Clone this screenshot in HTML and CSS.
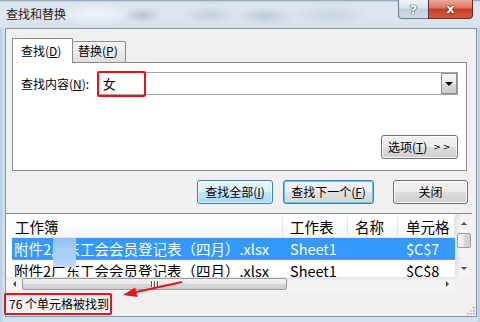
FILE: index.html
```html
<!DOCTYPE html>
<html>
<head>
<meta charset="utf-8">
<link rel="stylesheet" href="styles.css">
</head>
<body>
<div class="win">
  <div class="titlebar">
    <span class="title">查找和替换</span>
    <div class="caps">
      <span class="cap help">?</span>
      <span class="cap close">x</span>
    </div>
  </div>
  <div class="client">
    <div class="tabs">
      <span class="tab active">查找(<u>D</u>)</span>
      <span class="tab">替换(<u>P</u>)</span>
    </div>
    <div class="panel">
      <div class="findrow">
        <span class="lbl">查找内容(<u>N</u>):</span>
        <div class="combo">
          <span class="val">女</span>
          <span class="drop"><i class="tri-down"></i></span>
          <span class="mark"></span>
        </div>
      </div>
      <div class="optrow">
        <span class="btn opt">选项(<u>T</u>)<span class="gt">&gt;&gt;</span></span>
      </div>
    </div>
    <div class="btnrow">
      <span class="btn hot w76">查找全部(<u>I</u>)</span>
      <span class="btn def w91">查找下一个(<u>F</u>)</span>
      <span class="btn w75 ml19">关闭</span>
    </div>
    <div class="list">
      <div class="listmain">
        <div class="cols">
          <div class="grid hdr">
            <span class="c1">工作簿</span>
            <span class="c2">工作表</span>
            <span class="c3">名称</span>
            <span class="c4">单元格</span>
          </div>
          <div class="grid row sel">
            <span class="c1">附件2广东工会会员登记表（四月）.xlsx</span>
            <span class="c2">Sheet1</span>
            <span class="c3"></span>
            <span class="c4">$C$7</span>
          </div>
          <div class="grid row">
            <span class="c1">附件2广东工会会员登记表（四月）.xlsx</span>
            <span class="c2">Sheet1</span>
            <span class="c3"></span>
            <span class="c4">$C$8</span>
          </div>
          <span class="blur"></span>
        </div>
        <div class="vscroll">
          <span class="vbtn"><i class="tri-up"></i></span>
          <span class="vthumb"></span>
          <span class="vspace"></span>
          <span class="vbtn"><i class="tri-down small"></i></span>
        </div>
      </div>
      <div class="hscroll">
        <span class="hbtn"><i class="tri-left"></i></span>
        <span class="hthumb"><i class="grip"></i><i class="grip"></i><i class="grip"></i></span>
        <span class="hspace"></span>
        <span class="hbtn"><i class="tri-right"></i></span>
        <span class="corner"></span>
      </div>
    </div>
    <div class="status">
      <span class="found">76 个单元格被找到</span>
      <svg class="sizegrip" width="10" height="10" viewBox="0 0 10 10">
        <rect x="8" y="2" width="1.5" height="1.5" fill="#a8a8a8"/>
        <rect x="5" y="5" width="1.5" height="1.5" fill="#a8a8a8"/>
        <rect x="8" y="5" width="1.5" height="1.5" fill="#a8a8a8"/>
        <rect x="2" y="8" width="1.5" height="1.5" fill="#a8a8a8"/>
        <rect x="5" y="8" width="1.5" height="1.5" fill="#a8a8a8"/>
        <rect x="8" y="8" width="1.5" height="1.5" fill="#a8a8a8"/>
      </svg>
    </div>
  </div>
</div>
<svg class="arrow" width="70" height="24" viewBox="0 0 70 24">
  <line x1="62" y1="3" x2="14" y2="13.5" stroke="#e8141b" stroke-width="2"/>
  <polygon points="3,16 15,8.5 17.5,18" fill="#e8141b"/>
</svg>
</body>
</html>
```
FILE: styles.css
```css
html, body {
  margin: 0;
  padding: 0;
}
body {
  width: 480px;
  height: 322px;
  overflow: hidden;
  position: relative;
  font-family: "Noto Sans CJK SC", "Noto Sans", sans-serif;
  font-size: 12px;
  color: #000;
  background: #c6d6e7;
}
u { text-decoration: underline; text-underline-offset: 1px; }

.win {
  width: 480px;
  height: 322px;
  display: flex;
  flex-direction: column;
  background: linear-gradient(90deg, #b9cde2 0px, #d3e0ed 4px, #d3e0ed 476px, #b9cde2 480px);
}

/* title bar */
.titlebar {
  height: 28px;
  flex: none;
  display: flex;
  justify-content: space-between;
  align-items: flex-start;
  padding: 0 7px 0 6px;
  box-sizing: border-box;
  background:
    radial-gradient(ellipse 20px 8px at 143px 15px, rgba(150,166,184,0.55), rgba(150,166,184,0) 100%),
    radial-gradient(ellipse 28px 9px at 210px 15px, rgba(170,186,204,0.5), rgba(170,186,204,0) 100%),
    radial-gradient(ellipse 30px 9px at 265px 16px, rgba(160,176,196,0.5), rgba(160,176,196,0) 100%),
    radial-gradient(ellipse 40px 10px at 330px 15px, rgba(175,190,208,0.45), rgba(175,190,208,0) 100%),
    radial-gradient(ellipse 40px 12px at 95px 14px, rgba(255,255,255,0.6), rgba(255,255,255,0) 100%),
    linear-gradient(180deg, #8a9bb0 0px, #d9e3ee 2px, #dfe7f0 14px, #d6e0eb 28px);
}
.title {
  margin-top: 6px;
  line-height: 16px;
  font-size: 12px;
  color: #1a1a1a;
}
.caps { display: flex; }
.cap {
  height: 19px;
  box-sizing: border-box;
  display: flex;
  align-items: center;
  justify-content: center;
  font-family: "DejaVu Sans", sans-serif;
  font-weight: bold;
  color: #fff;
}
.help {
  width: 30px;
  border: 1px solid #68798e;
  border-top: none;
  border-right: none;
  border-radius: 0 0 0 4px;
  background: linear-gradient(180deg, #eef3f8 0%, #d8e1eb 45%, #c0cedd 50%, #cfdbe7 100%);
  font-size: 13px;
  text-shadow: 0 0 1px #3a4656, 0 0 1px #3a4656, 0 0 1px #3a4656;
}
.close {
  width: 45px;
  border: 1px solid #6a2b22;
  border-top: none;
  border-radius: 0 0 4px 0;
  background: linear-gradient(180deg, #eaa99c 0%, #d97a64 42%, #c4402a 52%, #d25a3f 100%);
  font-size: 13px;
  padding-bottom: 2px;
  text-shadow: 0 0 1px #3b120c, 0 0 1px #3b120c, 0 0 1px #3b120c;
}

/* client */
.client {
  margin-left: 5px;
  width: 472px;
  height: 289px;
  flex: none;
  box-sizing: border-box;
  border: 1px solid #8496ab;
  background: #f0f0f0;
  display: flex;
  flex-direction: column;
}

/* tabs */
.tabs {
  display: flex;
  align-items: flex-end;
  margin: 9px 0 0 6px;
  height: 24px;
}
.tab {
  box-sizing: border-box;
  border: 1px solid #898c95;
  border-bottom: none;
  line-height: 18px;
  height: 21px;
  width: 53px;
  padding-left: 5px;
  background: linear-gradient(180deg, #f4f4f4 0%, #ebebeb 50%, #dedede 100%);
  border-radius: 2px 2px 0 0;
  white-space: nowrap;
}
.tab.active {
  width: 61px;
  height: 25px;
  margin-bottom: -1px;
  padding-left: 8px;
  padding-top: 3px;
  background: #fff;
  position: relative;
  z-index: 1;
  border-radius: 0;
}
.tab + .tab { border-left: none; }

/* panel */
.panel {
  margin-left: 6px;
  width: 455px;
  height: 109px;
  box-sizing: border-box;
  border: 1px solid #898c95;
  background: #fff;
  padding: 9px 8px 11px 8px;
  display: flex;
  flex-direction: column;
  justify-content: space-between;
}
.findrow {
  display: flex;
  align-items: center;
}
.lbl {
  width: 77px;
  line-height: 16px;
  white-space: nowrap;
}
.combo {
  position: relative;
  width: 361px;
  height: 23px;
  box-sizing: border-box;
  border: 1px solid #a5a5a5;
  display: flex;
  align-items: center;
  justify-content: space-between;
  background: #fff;
}
.val {
  padding-left: 4px;
  font-size: 13px;
  line-height: 16px;
}
.drop {
  width: 16px;
  height: 21px;
  box-sizing: border-box;
  border: 1px solid #8e8e8e;
  background: linear-gradient(180deg, #f6f6f6 0%, #e8e8e8 50%, #d9d9d9 51%, #cdcdcd 100%);
  display: flex;
  align-items: center;
  justify-content: center;
}
.mark {
  position: absolute;
  left: -2px;
  top: -2px;
  width: 49px;
  height: 26px;
  box-sizing: border-box;
  border: 2px solid #e8141b;
  border-radius: 2px;
}
.optrow {
  display: flex;
  justify-content: flex-end;
}

/* buttons */
.btn {
  box-sizing: border-box;
  height: 24px;
  display: flex;
  align-items: center;
  justify-content: center;
  border: 1px solid #707070;
  border-radius: 3px;
  background: linear-gradient(180deg, #f2f2f2 0%, #ebebeb 48%, #dddddd 52%, #cfcfcf 100%);
  box-shadow: inset 0 0 0 1px rgba(255,255,255,0.8);
  line-height: 16px;
  white-space: nowrap;
}
.opt {
  width: 77px;
  justify-content: flex-start;
  padding-left: 6px;
}
.gt {
  margin-left: 6px;
  font-size: 9px;
  letter-spacing: 2px;
  font-family: "DejaVu Sans", sans-serif;
}
.btnrow {
  display: flex;
  justify-content: flex-end;
  gap: 10px;
  margin-top: 9px;
  padding-right: 8px;
}
.w76 { width: 76px; }
.w91 { width: 91px; }
.w75 { width: 75px; }
.ml19 { margin-left: 9px; }
.hot {
  border-color: #3c7fb1;
  background: linear-gradient(180deg, #eaf6fd 0%, #d9f0fc 48%, #bee6fd 52%, #a7d9f5 100%);
  box-shadow: inset 0 0 0 1px rgba(255,255,255,0.5);
}
.def {
  border-color: #3c7fb1;
  box-shadow: inset 0 0 0 1px #62c6f3;
  background: linear-gradient(180deg, #f3f3f3 0%, #ededed 48%, #e0e0e0 52%, #d6d6d6 100%);
}

/* list */
.list {
  margin-top: 9px;
  width: 466px;
  height: 78px;
  display: flex;
  flex-direction: column;
}
.listmain {
  height: 64px;
  box-sizing: border-box;
  border-top: 1px solid #828790;
  display: flex;
  background: #fff;
}
.cols {
  width: 449px;
  overflow: hidden;
  padding-left: 6px;
  box-sizing: border-box;
  position: relative;
  font-size: 14.5px;
}
.grid {
  display: grid;
  grid-template-columns: 271px 65px 50px 57px;
  white-space: nowrap;
}
.grid span { overflow: hidden; }
.hdr {
  height: 24px;
  box-sizing: border-box;
  border-bottom: 1px solid #e5e5e5;
  background: linear-gradient(180deg, #ffffff 0%, #fbfbfb 60%, #f4f5f6 100%);
  align-items: center;
  line-height: 20px;
  padding-top: 3px;
}
.hdr span { border-right: 1px solid #e5e5e5; height: 100%; }
.hdr .c1 { padding-left: 3px; }
.c1 { padding-left: 2px; }
.c2 { padding-left: 7px; }
.c3 { padding-left: 7px; }
.c4 { padding-left: 8px; }
.row {
  height: 22px;
  line-height: 22px;
  box-sizing: border-box;
}
.sel {
  background: #3399ff;
  color: #fff;
  border-bottom: 1px dotted #d0934a;
}
.blur {
  position: absolute;
  left: 47px;
  top: 24px;
  width: 23px;
  height: 29px;
  background:
    linear-gradient(180deg, #8dc0f5 0%, #a7cff6 40%, #a9d0f7 70%, #c2ddf9 100%);
}
.vscroll {
  width: 17px;
  display: flex;
  flex-direction: column;
  background: linear-gradient(90deg, #e3e3e3 0%, #f2f2f2 30%, #f4f4f4 100%);
}
.vbtn {
  height: 18px;
  display: flex;
  align-items: center;
  justify-content: center;
}
.vthumb {
  margin: 1px 1px 0 2px;
  height: 15px;
  box-sizing: border-box;
  border: 1px solid #9b9b9b;
  border-radius: 2px;
  background: linear-gradient(90deg, #f2f2f2 0%, #ebebeb 45%, #d6d6d6 55%, #cfcfcf 100%);
}
.vspace { flex: 1; }
.hscroll {
  height: 14px;
  display: flex;
  background: linear-gradient(180deg, #e6e6e6 0%, #f3f3f3 30%, #f5f5f5 100%);
}
.hbtn {
  width: 16px;
  display: flex;
  align-items: center;
  justify-content: center;
}
.hthumb {
  width: 265px;
  margin-top: 1px;
  height: 12px;
  box-sizing: border-box;
  border: 1px solid #9b9b9b;
  border-radius: 2px;
  background: linear-gradient(180deg, #f2f2f2 0%, #ebebeb 45%, #d6d6d6 55%, #cfcfcf 100%);
  display: flex;
  align-items: center;
  justify-content: center;
  gap: 1px;
}
.grip {
  width: 1px;
  height: 6px;
  background: #555;
  border-right: 1px solid #fff;
}
.hspace { flex: 1; }
.corner { width: 17px; background: #f0f0f0; }

/* arrows */
.tri-down {
  width: 0; height: 0;
  border-left: 4px solid transparent;
  border-right: 4px solid transparent;
  border-top: 4px solid #000;
}
.tri-down.small, .tri-up {
  border-left-width: 3px;
  border-right-width: 3px;
}
.tri-down.small { border-top: 3px solid #4a4a4a; }
.tri-up {
  width: 0; height: 0;
  border-left: 3px solid transparent;
  border-right: 3px solid transparent;
  border-bottom: 3px solid #4a4a4a;
}
.tri-left {
  width: 0; height: 0;
  border-top: 3px solid transparent;
  border-bottom: 3px solid transparent;
  border-right: 3px solid #4a4a4a;
}
.tri-right {
  width: 0; height: 0;
  border-top: 3px solid transparent;
  border-bottom: 3px solid transparent;
  border-left: 3px solid #4a4a4a;
}

/* status */
.status {
  flex: 1;
  display: flex;
  align-items: flex-start;
  justify-content: space-between;
  margin-left: -2px;
  padding-top: 2px;
}
.found {
  box-sizing: border-box;
  height: 22px;
  width: 108px;
  border: 2px solid #e8141b;
  border-radius: 2px;
  padding-left: 3px;
  line-height: 17px;
  white-space: nowrap;
}
.sizegrip {
  align-self: flex-end;
  margin: 0 1px 1px 0;
}

.arrow {
  position: absolute;
  left: 120px;
  top: 279px;
}
```
